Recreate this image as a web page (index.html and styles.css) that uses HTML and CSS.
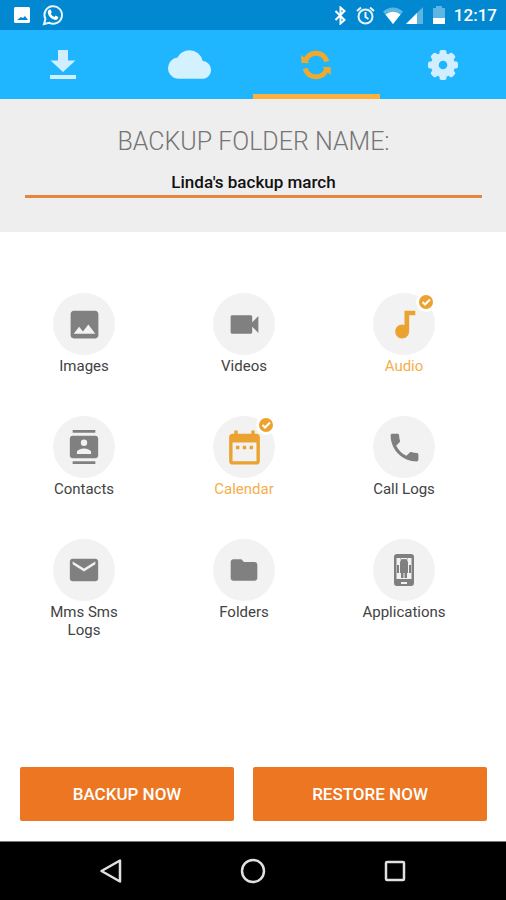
FILE: index.html
```html
<!DOCTYPE html>
<html lang="en">
<head>
<meta charset="utf-8">
<meta name="viewport" content="width=device-width, initial-scale=1">
<title>Backup</title>
<link rel="stylesheet" href="styles.css">
</head>
<body>
<header class="status">
  <div class="status-group notices">
    <svg width="18" height="18" viewBox="0 0 18 18" aria-hidden="true"><path fill="#fff" fill-rule="evenodd" d="M2 1h14l1 1v14l-1 1H2l-1-1V2zM4 14h11l-3-4-2 2-2-1z"/></svg>
    <svg width="22" height="22" viewBox="0 0 22 22" aria-hidden="true"><path fill="none" stroke="#e6f5fd" stroke-width="2" d="M2 20l1.400-5A8.800 8.800 0 1 1 7 18.700z"/><path fill="#fff" d="M7.300 5.500h1.300l1.200 2.800-1 1.400c.8 1.500 2 2.500 3.500 3.200l1.300-1.400 2.700 1.400c.2 2-1.500 3-3 3-3.700-.4-7.300-4-7.500-7.400 0-1.200.6-2.400 1.500-3z"/></svg>
  </div>
  <div class="status-group">
    <svg width="13" height="19" viewBox="0 0 13 19" aria-hidden="true"><path fill="none" stroke="#fff" stroke-width="2" d="M1.500 5l9 9-4 3.500v-16l4 3.500-9 9"/></svg>
    <svg class="alarm" width="19" height="19" viewBox="0 0 19 19" aria-hidden="true"><g fill="none" stroke="#e6f5fd" stroke-width="2"><circle cx="9.500" cy="10.500" r="7"/><path d="M9.500 6v5l3 2M1 5l4-3.500M18 5l-4-3.500"/></g></svg>
    <svg width="20" height="17" viewBox="0 0 20 17" aria-hidden="true"><path fill="#5db5e2" d="M0 4.500Q10-3.500 20 4.500L10 17z"/><path fill="#fff" d="M2.500 7.500Q10 2 17.500 7.500L10 17z"/></svg>
    <svg class="signal" width="17" height="17" viewBox="0 0 17 17" aria-hidden="true"><path fill="#5db5e2" d="M17 0v17H0z"/><path fill="#fff" d="M11 6v11H0z"/></svg>
    <svg class="battery" width="12" height="18" viewBox="0 0 12 18" aria-hidden="true"><path fill="#5db5e2" d="M3 0h6v2h3v16H0V2h3z"/><path fill="#fff" d="M0 12h12v6H0z"/></svg>
    <time>12:17</time>
  </div>
</header>

<nav class="tabs" aria-label="Sections">
  <button class="tab" type="button" aria-label="Download"><svg width="28" height="30" viewBox="0 0 28 30"><path fill="#d0eeff" d="M9 0h10v10.500h7.500L14 22 1.500 10.500H9zM1 25h26v4H1z"/></svg></button>
  <button class="tab" type="button" aria-label="Cloud"><svg width="43" height="43" viewBox="0 0 24 24"><path fill="#d4f1ff" d="M19.350 10.040A7.490 7.490 0 0 0 12 4C9.110 4 6.600 5.640 5.350 8.040A5.994 5.994 0 0 0 0 14c0 3.310 2.690 6 6 6h13c2.760 0 5-2.240 5-5 0-2.640-2.050-4.780-4.650-4.960z"/></svg></button>
  <button class="tab active" type="button" aria-label="Backup and restore" aria-current="page"><svg width="30" height="30" viewBox="0 0 30 30"><g id="half-turn"><path fill="none" stroke="#eeaa2c" stroke-width="5" d="M4 11.500C8 .5 22 .5 26 11.500"/><path fill="#eeaa2c" d="M0 5l2 1.500L8.500 13H.5z"/></g><use href="#half-turn" transform="rotate(180 15 15)"/></svg></button>
  <button class="tab" type="button" aria-label="Settings"><svg width="32" height="32" viewBox="-16 -16 32 32"><g fill="#d0eeff"><g id="teeth"><rect x="-3.500" y="-15" width="7" height="30" rx="2"/><rect x="-15" y="-3.500" width="30" height="7" rx="2"/></g><use href="#teeth" transform="rotate(45)"/><circle r="12"/></g><circle r="4.300" fill="#1fb6ff"/></svg></button>
</nav>

<main>
  <section class="folder">
    <label class="folder-title" for="folder-name">BACKUP FOLDER NAME:</label>
    <input class="folder-name" id="folder-name" type="text" value="Linda's backup march">
  </section>

  <section class="grid" aria-label="Items to back up">
    <button class="item" type="button" aria-pressed="false"><span class="disc"><svg width="37" height="37" viewBox="0 0 24 24"><path d="M21 19V5c0-1.100-.9-2-2-2H5c-1.100 0-2 .9-2 2v14c0 1.100.9 2 2 2h14c1.100 0 2-.9 2-2zM8.500 13.500l2.500 3.010L14.500 12l4.500 6H5l3.500-4.500z"/></svg></span><span>Images</span></button>
    <button class="item" type="button" aria-pressed="false"><span class="disc"><svg width="37" height="37" viewBox="0 0 24 24"><path d="M17 10.500V7c0-.55-.45-1-1-1H4c-.55 0-1 .45-1 1v10c0 .55.450 1 1 1h12c.55 0 1-.45 1-1v-3.500l4 4v-11l-4 4z"/></svg></span><span>Videos</span></button>
    <button class="item" type="button" aria-pressed="true"><span class="disc"><svg width="37" height="37" viewBox="0 0 24 24"><path d="M12 3v9.280A4.390 4.390 0 0 0 10.500 12C8.010 12 6 14.010 6 16.500S8.010 21 10.500 21c2.310 0 4.200-1.750 4.450-4H15V6h4V3h-7z"/></svg><svg class="badge" viewBox="0 0 20 20"><circle class="ring" cx="10" cy="10" r="10"/><circle cx="10" cy="10" r="7"/><path class="tick" d="M6.500 10l2.500 2.500 5-5"/></svg></span><span>Audio</span></button>

    <button class="item" type="button" aria-pressed="false"><span class="disc"><svg width="34" height="34" viewBox="0 0 24 24"><path d="M20 0H4v2h16V0zM4 24h16v-2H4v2zM20 4H4c-1.100 0-2 .9-2 2v12c0 1.100.9 2 2 2h16c1.100 0 2-.9 2-2V6c0-1.100-.9-2-2-2zm-8 2.750a2.250 2.250 0 1 1 0 4.500 2.250 2.250 0 0 1 0-4.500zM17 17H7v-1.500c0-1.670 3.330-2.500 5-2.500s5 .83 5 2.500V17z"/></svg></span><span>Contacts</span></button>
    <button class="item" type="button" aria-pressed="true"><span class="disc"><svg width="41" height="41" viewBox="0 0 24 24"><path d="M9 11H7v2h2v-2zm4 0h-2v2h2v-2zm4 0h-2v2h2v-2zm2-7h-1V2h-2v2H8V2H6v2H5c-1.110 0-1.990.9-1.990 2L3 20c0 1.100.89 2 2 2h14c1.100 0 2-.9 2-2V6c0-1.100-.9-2-2-2zm0 16H5V9h14v11z"/></svg><svg class="badge" viewBox="0 0 20 20"><circle class="ring" cx="10" cy="10" r="10"/><circle cx="10" cy="10" r="7"/><path class="tick" d="M6.500 10l2.500 2.500 5-5"/></svg></span><span>Calendar</span></button>
    <button class="item" type="button" aria-pressed="false"><span class="disc"><svg width="37" height="37" viewBox="0 0 24 24"><path d="M6.620 10.790c1.440 2.830 3.760 5.140 6.590 6.590l2.200-2.200c.27-.27.670-.36 1.020-.24 1.120.37 2.330.57 3.570.57.55 0 1 .45 1 1V20c0 .55-.45 1-1 1-9.390 0-17-7.610-17-17 0-.55.450-1 1-1h3.500c.55 0 1 .45 1 1 0 1.250.2 2.450.57 3.570.11.350.030.740-.25 1.020l-2.200 2.200z"/></svg></span><span>Call Logs</span></button>

    <button class="item" type="button" aria-pressed="false"><span class="disc"><svg width="34" height="34" viewBox="0 0 24 24"><path d="M20 4H4c-1.100 0-1.990.9-1.990 2L2 18c0 1.100.9 2 2 2h16c1.100 0 2-.9 2-2V6c0-1.100-.9-2-2-2zm0 4l-8 5-8-5V6l8 5 8-5v2z"/></svg></span><span>Mms Sms<br>Logs</span></button>
    <button class="item" type="button" aria-pressed="false"><span class="disc"><svg width="32" height="32" viewBox="0 0 24 24"><path d="M10 4H4c-1.100 0-1.990.9-1.990 2L2 18c0 1.100.9 2 2 2h16c1.100 0 2-.9 2-2V8c0-1.100-.9-2-2-2h-8l-2-2z"/></svg></span><span>Folders</span></button>
    <button class="item" type="button" aria-pressed="false"><span class="disc"><svg width="20" height="32" viewBox="0 0 20 32"><path fill-rule="evenodd" d="M3 0h14a3 3 0 0 1 3 3v26a3 3 0 0 1-3 3H3a3 3 0 0 1-3-3V3a3 3 0 0 1 3-3zM2.500 4v21h15V4zM7 28v2h6v-2z"/><path d="M6 9a4 4 0 0 1 8 0zM6 9h8v10H6zM3 11h2v8H3zM15 11h2v8h-2zM7 18h2.500v6H7zM10.500 18H13v6h-2.500z"/><path class="line" d="M6.500 4.500l1.500 2M13.500 4.500l-1.500 2"/></svg></span><span>Applications</span></button>
  </section>

  <section class="actions">
    <button class="action" type="button">BACKUP NOW</button>
    <button class="action wide" type="button">RESTORE NOW</button>
  </section>
</main>

<nav class="system" aria-label="System">
  <button type="button" aria-label="Back"><svg width="24" height="26" viewBox="0 0 24 26"><path d="M2.500 13L21 2.500v21z"/></svg></button>
  <button type="button" aria-label="Home"><svg width="26" height="26" viewBox="0 0 26 26"><circle cx="13" cy="13" r="11"/></svg></button>
  <button type="button" aria-label="Recent apps"><svg width="24" height="24" viewBox="0 0 24 24"><rect x="3" y="3" width="18" height="18" rx="1"/></svg></button>
</nav>
</body>
</html>
```
FILE: styles.css
```css
* {
  box-sizing: border-box;
}

body {
  margin: 0;
  min-height: 100vh;
  display: flex;
  flex-direction: column;
  background: #fff;
  color: #424242;
  font-family: Roboto, "Liberation Sans", sans-serif;
}

button {
  margin: 0;
  padding: 0;
  border: 0;
  background: none;
  color: inherit;
  font: inherit;
  cursor: pointer;
}

svg {
  display: block;
  flex: none;
}

.status {
  display: flex;
  justify-content: space-between;
  align-items: center;
  height: 30px;
  padding: 0 9px 0 13px;
  background: #0288d1;
  color: #fff;
}

.status-group {
  display: flex;
  align-items: center;
}

.notices {
  gap: 11px;
}

.alarm {
  margin: 0 8px 0 9px;
}

.signal {
  margin-left: 3px;
}

.battery {
  margin: 0 9px 0 10px;
}

.status time {
  font-size: 17px;
  font-weight: 500;
  line-height: 30px;
}

.tabs {
  display: flex;
  height: 69px;
  background: #1fb6ff;
}

.tab {
  flex: 1;
  display: flex;
  justify-content: center;
  align-items: center;
  padding-top: 5px;
  border-bottom: 5px solid transparent;
}

.active {
  border-bottom-color: #fbb040;
}

main {
  flex: 1;
  display: flex;
  flex-direction: column;
}

.folder {
  display: flex;
  flex-direction: column;
  padding: 26px 24px 34px 25px;
  background: #eee;
}

.folder-title {
  color: #757575;
  font-size: 25px;
  font-weight: 300;
  line-height: 34px;
  text-align: center;
}

.folder-name {
  width: 100%;
  height: 39px;
  padding: 10px 0 0;
  border: 0;
  border-bottom: 3px solid #e68540;
  border-radius: 0;
  outline: 0;
  background: none;
  color: #111;
  font: 500 17px/26px Roboto, "Liberation Sans", sans-serif;
  text-align: center;
}

.grid {
  display: grid;
  grid-template-columns: repeat(3, 1fr);
  row-gap: 24px;
  padding: 61px 22px 0 4px;
}

.item {
  display: flex;
  flex-direction: column;
  align-items: center;
  gap: 2px;
  min-height: 99px;
  margin-bottom: auto;
  padding-bottom: 2px;
  font-size: 15px;
  line-height: 18px;
}

.disc {
  position: relative;
  display: flex;
  justify-content: center;
  align-items: center;
  width: 62px;
  height: 62px;
  border-radius: 50%;
  background: #f2f2f2;
  fill: #808080;
}

.item[aria-pressed="true"] {
  color: #f5ae4c;
}

.item[aria-pressed="true"] .disc {
  fill: #eba22f;
}

.badge {
  position: absolute;
  top: -1px;
  right: -1px;
  width: 20px;
  height: 20px;
}

.badge .ring {
  fill: #fff;
}

.badge .tick {
  fill: none;
  stroke: #fff;
  stroke-width: 2;
}

.line {
  fill: none;
  stroke: #808080;
}

.actions {
  display: flex;
  gap: 19px;
  margin-top: auto;
  padding: 20px 19px 20px 20px;
}

.action {
  flex: 214;
  height: 54px;
  border-radius: 2px;
  background: #ec7622;
  color: #fff;
  font-size: 17px;
  font-weight: 500;
}

.wide {
  flex: 234;
}

.system {
  display: flex;
  justify-content: center;
  gap: 82px;
  height: 59px;
  border-top: 1px solid #777;
  background: #000;
}

.system button {
  display: flex;
  justify-content: center;
  align-items: center;
  width: 60px;
}

.system svg {
  fill: none;
  stroke: #e0e0e0;
  stroke-width: 2.5;
  stroke-linejoin: round;
}
```
